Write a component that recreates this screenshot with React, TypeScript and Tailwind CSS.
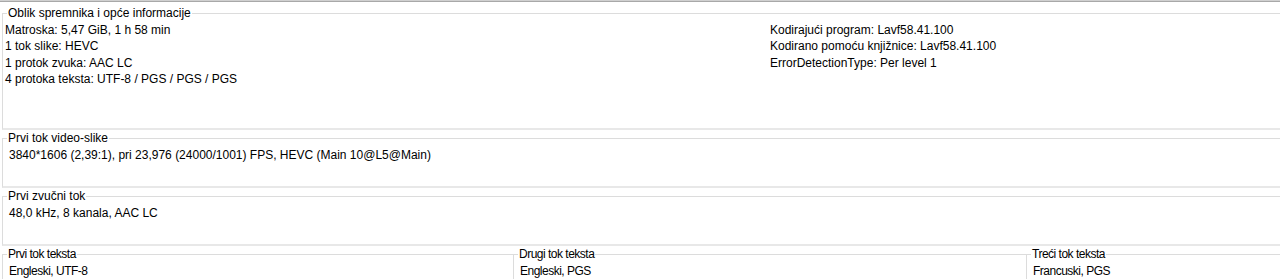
import React from "react";

const font = { fontFamily: '"Liberation Sans", Arial, sans-serif' };

function Group({
  title,
  className,
  children,
  condensed,
}: {
  title: string;
  className?: string;
  children?: React.ReactNode;
  condensed?: boolean;
}) {
  return (
    <fieldset
      className={`min-w-0 border-0 border-t border-l border-[#dcdcdc] ${className ?? ""}`}
    >
      <legend
        className={`ml-[4px] px-[1px] text-[12px] leading-[16px] text-black ${condensed ? "tracking-[-0.5px]" : ""}`}
      >
        {title}
      </legend>
      {children}
    </fieldset>
  );
}

export default function App() {
  return (
    <div
      className="w-[1280px] h-[279px] overflow-hidden bg-white text-black text-[12px]"
      style={font}
    >
      <div className="h-[1px] bg-[#d0d0d0]" />
      <div className="h-[1px] bg-[#a8a8a8]" />
      <div className="pl-[2px] pt-[3px]">
        <Group
          title="Oblik spremnika i opće informacije"
          className="h-[125px] border-b-2 border-b-[#e8e8e8]"
        >
          <div className="flex pt-[1px] leading-[16.4px]">
            <div className="w-[767px] pl-[2px]">
              <div>Matroska: 5,47 GiB, 1 h 58 min</div>
              <div>1 tok slike: HEVC</div>
              <div>1 protok zvuka: AAC LC</div>
              <div>4 protoka teksta: UTF-8 / PGS / PGS / PGS</div>
            </div>
            <div>
              <div>Kodirajući program: Lavf58.41.100</div>
              <div>Kodirano pomoću knjižnice: Lavf58.41.100</div>
              <div>ErrorDetectionType: Per level 1</div>
            </div>
          </div>
        </Group>
        <Group
          title="Prvi tok video-slike"
          className="h-[58px] border-b-2 border-b-[#e8e8e8]"
        >
          <div className="flex pt-[1px] leading-[16.4px]">
            <div className="w-[6px] shrink-0" />
            <div>3840*1606 (2,39:1), pri 23,976 (24000/1001) FPS, HEVC (Main 10@L5@Main)</div>
          </div>
        </Group>
        <Group
          title="Prvi zvučni tok"
          className="h-[58px] border-b-2 border-b-[#e8e8e8]"
        >
          <div className="flex pt-[1px] leading-[16.4px]">
            <div className="w-[6px] shrink-0" />
            <div>48,0 kHz, 8 kanala, AAC LC</div>
          </div>
        </Group>
        <div className="flex">
          <Group title="Prvi tok teksta" className="w-[511px] shrink-0" condensed>
            <div className="pt-[1px] pl-[6px] leading-[16.4px] tracking-[-0.5px]">
              Engleski, UTF-8
            </div>
          </Group>
          <Group title="Drugi tok teksta" className="w-[513px] shrink-0" condensed>
            <div className="pt-[1px] pl-[6px] leading-[16.4px] tracking-[-0.5px]">
              Engleski, PGS
            </div>
          </Group>
          <Group title="Treći tok teksta" className="w-[513px] shrink-0" condensed>
            <div className="pt-[1px] pl-[6px] leading-[16.4px] tracking-[-0.5px]">
              Francuski, PGS
            </div>
          </Group>
        </div>
      </div>
    </div>
  );
}
